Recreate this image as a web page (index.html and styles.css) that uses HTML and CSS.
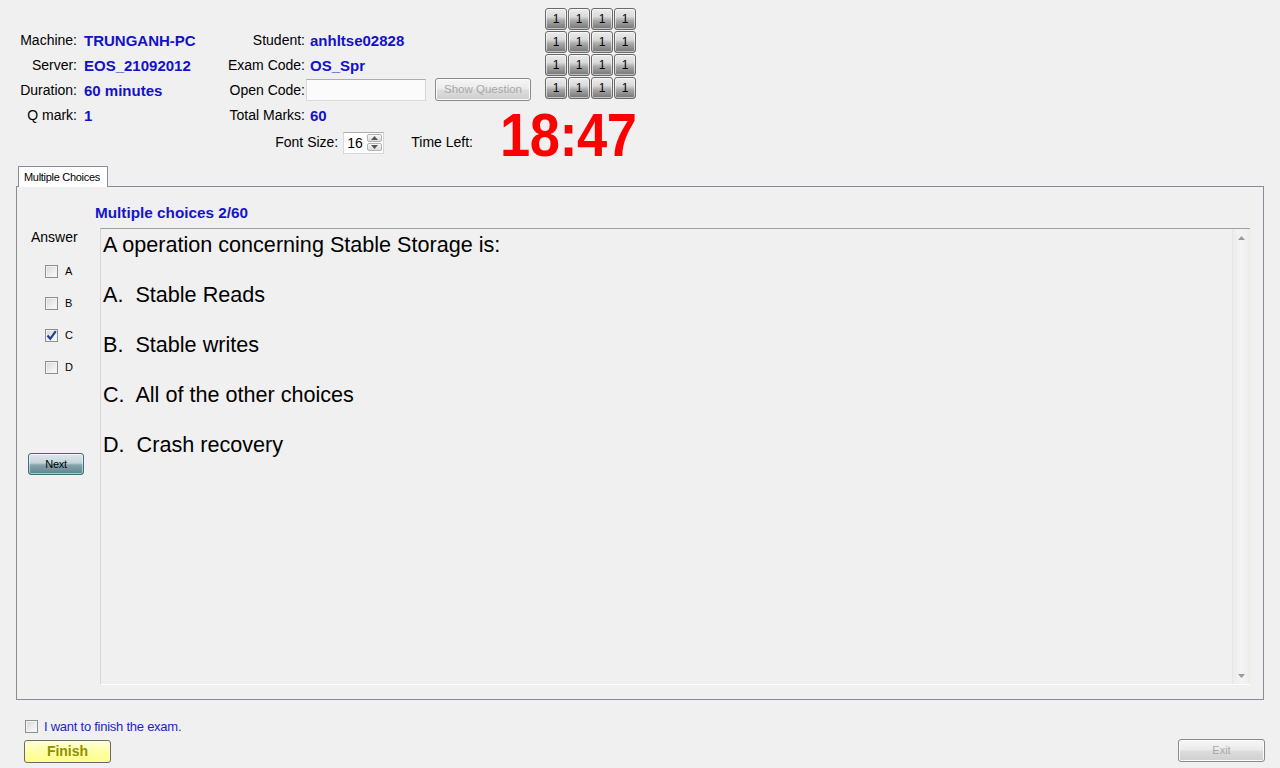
FILE: index.html
```html
<!DOCTYPE html>
<html>
<head>
<meta charset="utf-8">
<title>Exam</title>
<link rel="stylesheet" href="styles.css">
</head>
<body>
<div class="header">
  <div class="lbl c1 r2">Machine:</div>
  <div class="val c2 r2">TRUNGANH-PC</div>
  <div class="lbl c3 r2">Student:</div>
  <div class="val c4w r2">anhltse02828</div>

  <div class="lbl c1 r3">Server:</div>
  <div class="val c2 r3">EOS_21092012</div>
  <div class="lbl c3 r3">Exam Code:</div>
  <div class="val c4w r3">OS_Spr</div>

  <div class="lbl c1 r4">Duration:</div>
  <div class="val c2 r4">60 minutes</div>
  <div class="lbl c3 r4">Open Code:</div>
  <div class="c4 r4 inputcell"><div class="textinput"></div></div>
  <div class="btncell r4"><div class="btn disabled showq">Show Question</div></div>

  <div class="lbl c1 r5">Q mark:</div>
  <div class="val c2 r5">1</div>
  <div class="lbl c3 r5">Total Marks:</div>
  <div class="val c4w r5">60</div>

  <div class="fontrow">
    <span class="plain">Font Size:</span>
    <div class="spinner">
      <span class="spinval">16</span>
      <div class="spinbtns">
        <div class="spinbtn"><svg width="7" height="4" viewBox="0 0 7 4"><path d="M0 4 L3.5 0 L7 4 Z" fill="#555"/></svg></div>
        <div class="spinbtn"><svg width="7" height="4" viewBox="0 0 7 4"><path d="M0 0 L3.5 4 L7 0 Z" fill="#555"/></svg></div>
      </div>
    </div>
    <span class="plain timeleft">Time Left:</span>
  </div>

  <div class="clock">18:47</div>

  <div class="qgrid">
    <div class="qb">1</div><div class="qb">1</div><div class="qb">1</div><div class="qb">1</div>
    <div class="qb">1</div><div class="qb">1</div><div class="qb">1</div><div class="qb">1</div>
    <div class="qb">1</div><div class="qb">1</div><div class="qb">1</div><div class="qb">1</div>
    <div class="qb">1</div><div class="qb">1</div><div class="qb">1</div><div class="qb">1</div>
  </div>
</div>

<div class="tabs">
  <div class="tabhead">Multiple Choices</div>
  <div class="panel">
    <div class="qtitle">Multiple choices 2/60</div>
    <div class="qbody">
      <div class="answers">
        <div class="anslabel">Answer</div>
        <div class="opts">
          <div class="opt"><span class="cb"></span><span class="optl">A</span></div>
          <div class="opt"><span class="cb"></span><span class="optl">B</span></div>
          <div class="opt"><span class="cb checked"><svg width="11" height="11" viewBox="0 0 11 11"><path d="M1.5 5.5 L4.3 8.8 L9.8 1.2" fill="none" stroke="#1e3f93" stroke-width="2.2"/></svg></span><span class="optl">C</span></div>
          <div class="opt"><span class="cb"></span><span class="optl">D</span></div>
        </div>
        <div class="btn next">Next</div>
      </div>
      <div class="textbox">
        <div class="qtext">
          <div class="line">A operation concerning Stable Storage is:</div>
          <div class="line">A.  Stable Reads</div>
          <div class="line">B.  Stable writes</div>
          <div class="line">C.  All of the other choices</div>
          <div class="line">D.  Crash recovery</div>
        </div>
        <div class="scrollbar">
          <div class="sarrow"><svg width="7" height="4" viewBox="0 0 7 4"><path d="M0 4 L3.5 0 L7 4 Z" fill="#9a9a9a"/></svg></div>
          <div class="sarrow"><svg width="7" height="4" viewBox="0 0 7 4"><path d="M0 0 L3.5 4 L7 0 Z" fill="#9a9a9a"/></svg></div>
        </div>
      </div>
    </div>
  </div>
</div>

<div class="footer">
  <div class="footleft">
    <div class="finishrow"><span class="cb"></span><span class="finishlabel">I want to finish the exam.</span></div>
    <div class="btn finish">Finish</div>
  </div>
  <div class="btn disabled exit">Exit</div>
</div>
</body>
</html>
```

FILE: styles.css
```css
html, body {
  margin: 0;
  padding: 0;
}
body {
  width: 1280px;
  height: 768px;
  overflow: hidden;
  background: #f0f0f0;
  font-family: "Liberation Sans", Arial, sans-serif;
  color: #000;
}

/* ---------- header ---------- */
.header {
  display: grid;
  grid-template-columns: 78px 144px 84px 126px 63px 45px 100px;
  grid-template-rows: 28px 25px 25px 25px 25px 30px;
}
.lbl {
  font-size: 14px;
  line-height: 25px;
  text-align: right;
  padding-right: 1px;
  white-space: nowrap;
}
.val {
  font-size: 15px;
  line-height: 25px;
  font-weight: bold;
  color: #1212c8;
  white-space: nowrap;
}
.c1 { grid-column: 1; }
.c2 { grid-column: 2; padding-left: 6px; }
.c3 { grid-column: 3; }
.c4 { grid-column: 4; }
.c4w { grid-column: 4 / 7; padding-left: 4px; }
.r2 { grid-row: 2; }
.r3 { grid-row: 3; }
.r4 { grid-row: 4; }
.r5 { grid-row: 5; }

.inputcell {
  padding-top: 1px;
}
.textinput {
  width: 120px;
  height: 22px;
  box-sizing: border-box;
  background: #fbfbfb;
  border: 1px solid #d5d9df;
  border-top-color: #abadb3;
}
.btncell {
  grid-column: 5 / 7;
  padding-left: 3px;
}

.btn {
  box-sizing: border-box;
  border: 1px solid #707070;
  border-radius: 3px;
  font-size: 11px;
  text-align: center;
  white-space: nowrap;
}
.btn.disabled {
  color: #a8a8a8;
  border-color: #8a8a8a;
  background: linear-gradient(to bottom, #f6f6f6 0%, #ebebeb 45%, #dcdcdc 55%, #cfcfcf 100%);
  box-shadow: inset 0 0 0 1px #fbfbfb;
}
.showq {
  width: 96px;
  height: 23px;
  line-height: 21px;
  font-size: 11.5px;
}

.fontrow {
  grid-row: 6;
  grid-column: 1 / 6;
  display: flex;
  justify-content: flex-end;
  align-items: center;
  padding-right: 22px;
  padding-bottom: 3px;
}
.plain {
  font-size: 14px;
  white-space: nowrap;
}
.timeleft {
  margin-left: 27px;
}
.spinner {
  margin-left: 5px;
  margin-top: 3px;
  width: 41px;
  height: 22px;
  box-sizing: border-box;
  background: #fff;
  border: 1px solid #d5d9df;
  border-top-color: #abadb3;
  display: flex;
  align-items: center;
  justify-content: space-between;
  padding: 1px 1px 1px 3px;
}
.spinval {
  font-size: 14px;
}
.spinbtns {
  display: flex;
  flex-direction: column;
  gap: 1px;
  height: 18px;
}
.spinbtn {
  width: 15px;
  height: 8px;
  box-sizing: border-box;
  border: 1px solid #b4b4b4;
  border-radius: 2px;
  background: linear-gradient(to bottom, #f8f8f8, #dcdcdc);
  display: flex;
  align-items: center;
  justify-content: center;
}

.clock {
  grid-row: 5 / 7;
  grid-column: 6 / 8;
  justify-self: end;
  align-self: start;
  margin-top: 5px;
  margin-right: 3px;
  font-size: 61px;
  line-height: 55px;
  font-weight: bold;
  color: #ff0000;
  letter-spacing: -0.5px;
  white-space: nowrap;
  transform: scaleX(0.89);
  transform-origin: right center;
}

.qgrid {
  grid-row: 1 / 5;
  grid-column: 7;
  padding-top: 8px;
  padding-left: 5px;
  display: grid;
  grid-template-columns: repeat(4, 22px);
  grid-auto-rows: 22px;
  gap: 1px;
  align-content: start;
}
.qb {
  box-sizing: border-box;
  border: 1px solid #6a6a6a;
  border-radius: 3px;
  background: linear-gradient(to bottom, #ececec 0%, #dadada 38%, #a9a9a9 58%, #747474 100%);
  box-shadow: inset 0 0 0 1px rgba(255,255,255,0.55);
  font-size: 12px;
  line-height: 20px;
  text-align: center;
  color: #000;
}

/* ---------- tabs ---------- */
.tabs {
  margin-top: 8px;
  margin-left: 16px;
  width: 1248px;
}
.tabhead {
  position: relative;
  z-index: 1;
  margin-left: 2px;
  width: 90px;
  height: 21px;
  box-sizing: border-box;
  background: #fff;
  border: 1px solid #898c95;
  border-bottom: none;
  margin-bottom: -1px;
  font-size: 11px;
  letter-spacing: -0.3px;
  line-height: 20px;
  padding-left: 5px;
  white-space: nowrap;
}
.panel {
  height: 514px;
  box-sizing: border-box;
  border: 1px solid #898c95;
  background: #f0f0f0;
  padding: 16px 13px 14px 0;
}
.qtitle {
  margin-left: 78px;
  font-size: 15.3px;
  font-weight: bold;
  color: #1515cc;
  line-height: 20px;
  height: 20px;
  margin-bottom: 5px;
}
.qbody {
  display: flex;
  height: 457px;
}
.answers {
  width: 83px;
  flex: none;
}
.anslabel {
  font-size: 14px;
  line-height: 18px;
  padding-left: 14px;
}
.opts {
  margin-top: 9px;
}
.opt {
  height: 32px;
  display: flex;
  align-items: center;
  padding-left: 28px;
}
.cb {
  width: 13px;
  height: 13px;
  box-sizing: border-box;
  border: 1px solid #8e8f8f;
  background: linear-gradient(135deg, #d3d5d8 0%, #eceded 55%, #fbfbfb 100%);
  box-shadow: inset 0 0 0 1px #f2f2f2;
  display: flex;
  align-items: center;
  justify-content: center;
  flex: none;
}
.cb.checked svg {
  display: block;
}
.optl {
  margin-left: 7px;
  font-size: 11px;
}
.next {
  margin-top: 70px;
  margin-left: 11px;
  width: 56px;
  height: 22px;
  line-height: 20px;
  border-color: #3c6e7c;
  background: linear-gradient(to bottom, #dfe8eb 0%, #c4d3d8 45%, #86a3ab 55%, #5d8590 100%);
  box-shadow: inset 0 0 0 1px rgba(255,255,255,0.5);
  letter-spacing: -0.3px;
}

.textbox {
  flex: 1;
  display: flex;
  box-sizing: border-box;
  border-top: 1px solid #a0a0a0;
  border-left: 1px solid #d6d6d6;
  border-bottom: 1px solid #fdfdfd;
  background: #f0f0f0;
}
.qtext {
  flex: 1;
  padding: 3px 0 0 2px;
  font-size: 21.6px;
  line-height: 25px;
}
.line {
  white-space: pre;
  margin-bottom: 25px;
}
.scrollbar {
  width: 17px;
  flex: none;
  display: flex;
  flex-direction: column;
  justify-content: space-between;
  border-left: 1px solid #e6e6e6;
  background: linear-gradient(to right, #ececec, #f4f4f4 50%, #ececec);
}
.sarrow {
  height: 17px;
  display: flex;
  align-items: center;
  justify-content: center;
}

/* ---------- footer ---------- */
.footer {
  display: flex;
  justify-content: space-between;
  align-items: flex-end;
  padding: 0 15px 0 24px;
  margin-top: 18px;
}
.finishrow {
  height: 16px;
  display: flex;
  align-items: center;
  padding-left: 1px;
}
.finishlabel {
  margin-left: 6px;
  font-size: 13px;
  letter-spacing: -0.25px;
  color: #1f1fc4;
  white-space: nowrap;
}
.finish {
  margin-top: 6px;
  width: 87px;
  height: 23px;
  line-height: 21px;
  border-color: #6b6b6b;
  background: linear-gradient(to bottom, #ffffd8 0%, #ffffa8 50%, #ffff88 100%);
  font-size: 14px;
  font-weight: bold;
  color: #8f8f00;
}
.exit {
  width: 87px;
  height: 23px;
  line-height: 21px;
  margin-bottom: 1px;
}
```
